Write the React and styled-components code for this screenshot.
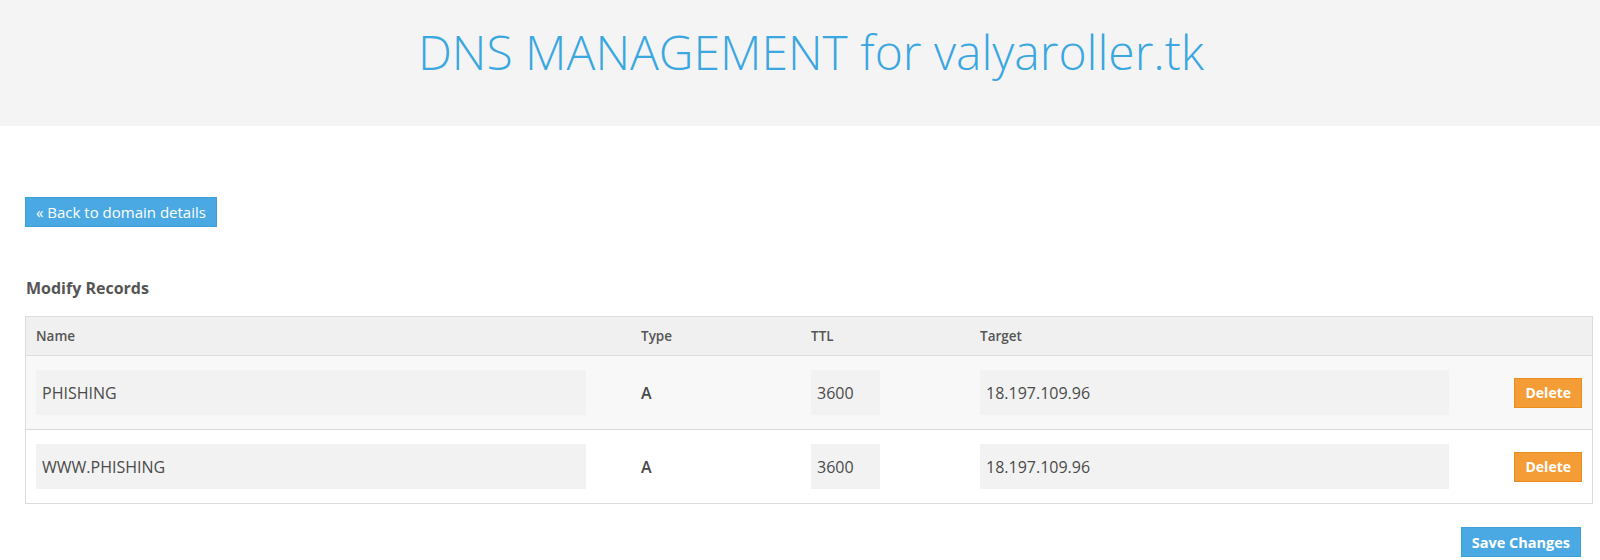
import styled, { createGlobalStyle } from "styled-components";

const GlobalStyle = createGlobalStyle`
  body {
    margin: 0;
    background: #ffffff;
    font-family: "Open Sans", "Liberation Sans", sans-serif;
    color: #555555;
  }
  * { box-sizing: border-box; }
`;

const records = [
  { name: "PHISHING", type: "A", ttl: "3600", target: "18.197.109.96" },
  { name: "WWW.PHISHING", type: "A", ttl: "3600", target: "18.197.109.96" },
];

function App() {
  return (
    <>
      <GlobalStyle />
      <Header>
        <Title>DNS MANAGEMENT for valyaroller.tk</Title>
      </Header>
      <Content>
        <Button $color="#4aa9e3" $border="#3f9fdb" $size="15px">« Back to domain details</Button>
        <Heading>Modify Records</Heading>
        <Table>
          <HeadRow>
            <HeadCell>Name</HeadCell>
            <HeadCell>Type</HeadCell>
            <HeadCell>TTL</HeadCell>
            <HeadCell>Target</HeadCell>
            <HeadCell />
          </HeadRow>
          {records.map((r, i) => (
            <Row key={r.name} $striped={i % 2 === 0}>
              <Cell><Field $width="550px" defaultValue={r.name} /></Cell>
              <Cell><TypeText>{r.type}</TypeText></Cell>
              <Cell><Field $width="69px" defaultValue={r.ttl} /></Cell>
              <Cell><Field $width="469px" defaultValue={r.target} /></Cell>
              <Cell $end>
                <Button $color="#f49d37" $border="#e98e1e" $bold>Delete</Button>
              </Cell>
            </Row>
          ))}
        </Table>
        <Footer>
          <Button $color="#4aa9e3" $border="#3f9fdb" $bold $size="14.5px">Save Changes</Button>
        </Footer>
      </Content>
    </>
  );
}

const Header = styled.header`
  height: 126px;
  background: #f4f4f4;
  display: flex;
  align-items: center;
  justify-content: center;
  padding-left: 22px;
  padding-bottom: 22px;
`;

const Title = styled.h1`
  margin: 0;
  font-family: "Open Sans", "Liberation Sans", sans-serif;
  font-weight: 300;
  font-size: 48px;
  line-height: 1.2;
  color: #3aa7e1;
`;

const Content = styled.main`
  padding: 71px 7px 0 25px;
  display: flex;
  flex-direction: column;
  align-items: flex-start;
`;

const Button = styled.button`
  height: 30px;
  padding: 0 10px;
  background: ${(p) => p.$color};
  border: 1px solid ${(p) => p.$border};
  border-radius: 0;
  color: #ffffff;
  font-family: "Open Sans", "Liberation Sans", sans-serif;
  font-size: ${(p) => p.$size || "14px"};
  font-weight: ${(p) => (p.$bold ? 700 : 400)};
  cursor: pointer;
`;

const Heading = styled.h3`
  margin: 50px 0 17px 1px;
  font-size: 16px;
  line-height: 22px;
  font-weight: 700;
  color: #555555;
`;

const Table = styled.div`
  width: 100%;
  border: 1px solid #dcdcdc;
`;

const columns = "605px 170px 169px 531px 1fr";

const HeadRow = styled.div`
  display: grid;
  grid-template-columns: ${columns};
  height: 39px;
  align-items: center;
  background: #f0f0f0;
  border-bottom: 1px solid #dcdcdc;
`;

const HeadCell = styled.div`
  padding: 0 10px;
  font-size: 13.5px;
  line-height: 18px;
  font-weight: 600;
  color: #555555;
`;

const Row = styled.div`
  display: grid;
  grid-template-columns: ${columns};
  align-items: center;
  padding: 14px 0;
  background: ${(p) => (p.$striped ? "#f8f8f8" : "#ffffff")};
  & + & {
    border-top: 1px solid #dcdcdc;
  }
`;

const Cell = styled.div`
  padding: 0 10px;
  display: flex;
  align-items: center;
  justify-content: ${(p) => (p.$end ? "flex-end" : "flex-start")};
`;

const Field = styled.input`
  width: ${(p) => p.$width};
  height: 45px;
  padding: 0 6px;
  border: none;
  outline: none;
  background: #f2f2f2;
  font-family: "Open Sans", "Liberation Sans", sans-serif;
  font-size: 16px;
  color: #4a4a4a;
`;

const TypeText = styled.span`
  font-size: 16px;
  font-weight: 600;
  color: #4a4a4a;
`;

const Footer = styled.div`
  align-self: stretch;
  display: flex;
  justify-content: flex-end;
  padding: 23px 12px 0 0;
`;

export default App;
